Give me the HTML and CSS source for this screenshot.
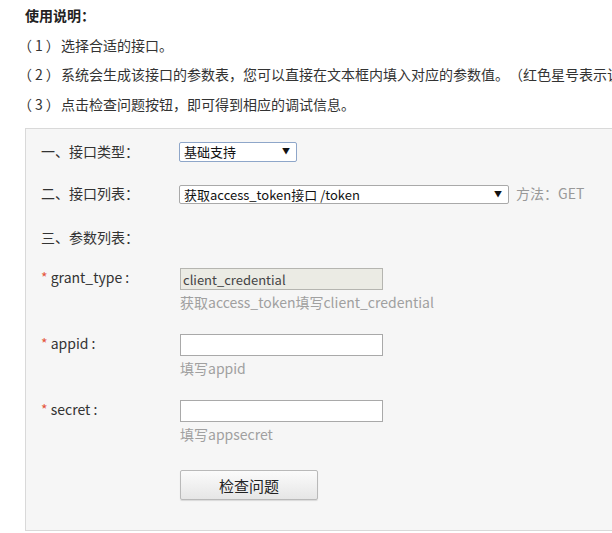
FILE: index.html
```html
<!DOCTYPE html>
<html lang="zh-CN">
<head>
<meta charset="utf-8">
<title>使用说明</title>
<link rel="stylesheet" href="styles.css">
</head>
<body>
<div class="page">
  <div class="intro">
    <div class="intro-title">使用说明：</div>
    <div class="intro-line"><span class="idx">（1）</span>选择合适的接口。</div>
    <div class="intro-line"><span class="idx">（2）</span>系统会生成该接口的参数表，您可以直接在文本框内填入对应的参数值。（红色星号表示该参数必填）</div>
    <div class="intro-line"><span class="idx">（3）</span>点击检查问题按钮，即可得到相应的调试信息。</div>
  </div>

  <div class="panel">
    <div class="row row-type">
      <div class="label">一、接口类型：</div>
      <div class="select-wrap sel-type">
        <select class="sel sel-focus"><option>基础支持</option></select>
        <span class="arrow">▼</span>
      </div>
    </div>

    <div class="row row-list">
      <div class="label">二、接口列表：</div>
      <div class="select-wrap sel-list">
        <select class="sel"><option>获取access_token接口 /token</option></select>
        <span class="arrow">▼</span>
      </div>
      <div class="method">方法：GET</div>
    </div>

    <div class="row row-params">
      <div class="label">三、参数列表：</div>
    </div>

    <div class="param">
      <div class="plabel"><span class="req">*</span> grant_type :</div>
      <div class="pctrl">
        <input class="inp inp-disabled" type="text" value="client_credential" disabled>
        <div class="hint">获取access_token填写client_credential</div>
      </div>
    </div>

    <div class="param">
      <div class="plabel"><span class="req">*</span> appid :</div>
      <div class="pctrl">
        <input class="inp" type="text">
        <div class="hint">填写appid</div>
      </div>
    </div>

    <div class="param">
      <div class="plabel"><span class="req">*</span> secret :</div>
      <div class="pctrl">
        <input class="inp" type="text">
        <div class="hint">填写appsecret</div>
      </div>
    </div>

    <div class="actions">
      <button class="btn" type="button">检查问题</button>
    </div>
  </div>
</div>
</body>
</html>
```

FILE: styles.css
```css
html, body {
  margin: 0;
  padding: 0;
  background: #ffffff;
  overflow: hidden;
}

body {
  font-family: "Noto Sans CJK SC", "Noto Sans", sans-serif;
  font-size: 14px;
  color: #333333;
  text-spacing-trim: space-all;
}

.page {
  width: 900px;
  padding: 1px 0 0 25px;
}

.intro {
  white-space: nowrap;
}

.intro-title {
  font-weight: bold;
  line-height: 29.5px;
  color: #222222;
}

.intro-line {
  line-height: 29.5px;
  color: #333333;
}

.idx {
  display: inline-block;
  width: 36px;
  text-spacing-trim: trim-start;
  letter-spacing: 3px;
  vertical-align: top;
}

.panel {
  margin-top: 9px;
  width: 720px;
  height: 403px;
  box-sizing: border-box;
  border: 1px solid #d9d9d9;
  background: #f6f6f6;
  padding: 12px 0 0 15px;
}

.row {
  display: flex;
  align-items: center;
}

.label {
  width: 138px;
  line-height: 20px;
  color: #333333;
  flex: none;
}

.row-list {
  margin-top: 22px;
}

.row-params {
  margin-top: 24px;
}

.select-wrap {
  position: relative;
  height: 20px;
  flex: none;
}

.sel-type {
  width: 118px;
}

.sel-list {
  width: 330px;
  height: 19px;
}

.sel {
  -webkit-appearance: none;
  appearance: none;
  width: 100%;
  height: 100%;
  box-sizing: border-box;
  margin: 0;
  border: 1px solid #a9a9a9;
  border-radius: 2px;
  background: #ffffff;
  font-family: "Noto Sans CJK SC", "Noto Sans", sans-serif;
  font-size: 13px;
  color: #111111;
  padding: 0 0 0 4px;
  line-height: 17px;
}

.sel-focus {
  border-color: #8ea6c9;
}

.arrow {
  position: absolute;
  right: 7px;
  top: 5px;
  font-size: 8px;
  line-height: 10px;
  color: #111111;
  pointer-events: none;
}

.method {
  margin-left: 7px;
  color: #999999;
  line-height: 20px;
}

.param {
  display: flex;
  align-items: flex-start;
  margin-top: 20px;
}

.plabel {
  width: 138px;
  flex: none;
  line-height: 20px;
  color: #333333;
  font-size: 14px;
}

.req {
  color: #e5553c;
}

.pctrl {
  padding-left: 1px;
  padding-top: 1px;
}

.inp {
  display: block;
  width: 203px;
  height: 22px;
  box-sizing: border-box;
  margin: 0;
  border: 1px solid #a9a9a9;
  background: #ffffff;
  padding: 0 2px;
  font-family: "Noto Sans CJK SC", "Noto Sans", sans-serif;
  font-size: 13px;
  color: #333333;
}

.inp-disabled {
  background: #ebebe4;
  border-color: #b5b5b0;
  color: #444444;
}

.hint {
  margin-top: 1px;
  line-height: 22px;
  color: #a0a0a0;
  white-space: nowrap;
}

.actions {
  margin-top: 25px;
  padding-left: 139px;
}

.btn {
  display: block;
  width: 138px;
  height: 30px;
  box-sizing: border-box;
  margin: 0;
  border: 1px solid #b9b9b9;
  border-radius: 2px;
  background: linear-gradient(#fbfbfb, #e6e6e6);
  box-shadow: 0 1px 1px rgba(0, 0, 0, 0.12);
  font-family: "Noto Sans CJK SC", "Noto Sans", sans-serif;
  font-size: 15px;
  color: #222222;
}
```
